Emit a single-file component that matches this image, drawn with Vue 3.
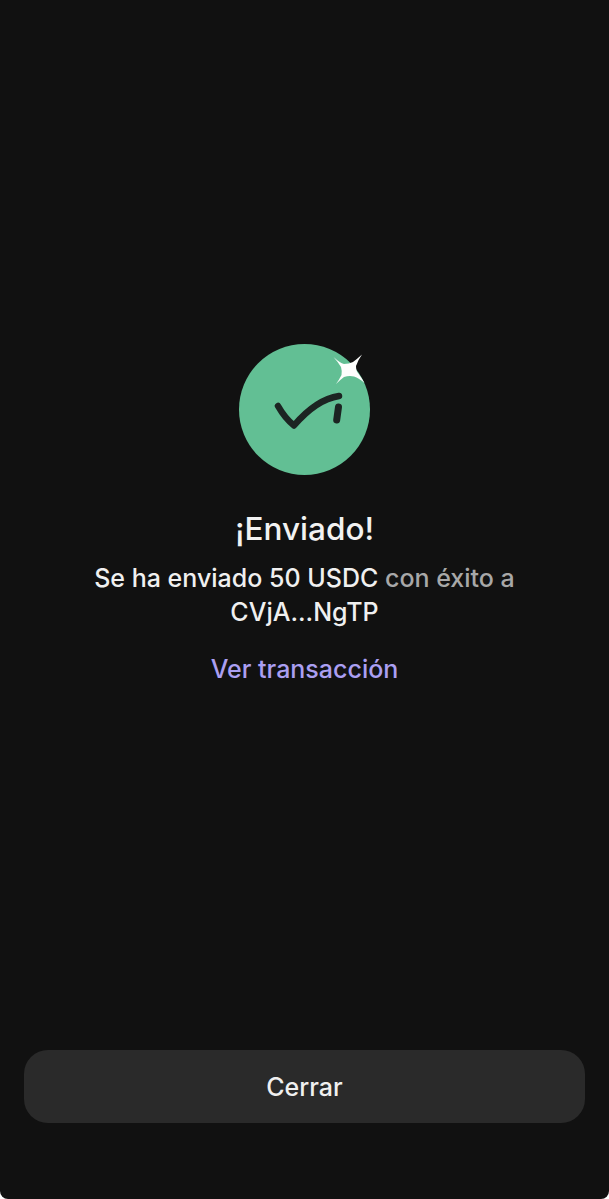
<script setup>
const amount = '50 USDC'
</script>

<template>
  <main class="screen">
    <section class="result">
      <svg class="badge" width="133" height="132" viewBox="0 0 133 132" aria-hidden="true">
        <circle cx="65.500" cy="65.500" r="65.500" fill="#62bf94" />
        <path d="M39 62 C43 69 48 76 55 81.500 C64 71 80 55 100 52" fill="none" stroke="#1c2422" stroke-width="6.500" stroke-linecap="round" stroke-linejoin="round" />
        <path d="M99.500 63 L97.700 76" fill="none" stroke="#1c2422" stroke-width="7" stroke-linecap="round" />
        <path d="M94.500 13 Q101 19 105 20 Q110 20 114 18 Q118 15 123 10.500 Q119 16 117 22 Q117 27 119 29 Q122 33 125.500 39 Q120 34 115 32.500 Q110 31.500 105 33 Q101 36 97 40 Q100 36 102.500 31 Q103 26 102 23 Q99 18 94.500 13 Z" fill="#fdfefd" />
      </svg>
      <h1 class="title">¡Enviado!</h1>
      <p class="message">
        <span class="strong">Se ha enviado {{ amount }}</span> <span class="muted">con éxito a</span><br />
        <span class="strong">CVjA...NgTP</span>
      </p>
      <a class="link">Ver transacción</a>
    </section>
    <footer class="actions">
      <button class="close" type="button">Cerrar</button>
    </footer>
  </main>
</template>

<style>
html, body { margin: 0; background: #fff; }
</style>

<style scoped>
.screen {
  box-sizing: border-box;
  width: 609px;
  height: 1199px;
  background: #111111;
  border-radius: 0 0 8px 8px;
  display: flex;
  flex-direction: column;
  font-family: Inter, "Liberation Sans", sans-serif;
  padding: 344px 24px 76px;
}
.result {
  flex: 1;
  display: flex;
  flex-direction: column;
  align-items: center;
}
.badge { display: block; margin-left: 1px; }
.title {
  margin: 28px 0 0;
  font-size: 31.500px;
  line-height: 50px;
  font-weight: 500;
  color: #f2f2f2;
}
.message {
  margin: 7px 0 0;
  font-size: 25px;
  line-height: 34px;
  text-align: center;
  font-weight: 500;
}
.strong { color: #f0f0f0; }
.muted { color: #a8a8a8; }
.link {
  margin-top: 23px;
  font-size: 25px;
  line-height: 34px;
  font-weight: 500;
  color: #ab9ff2;
}
.actions { display: flex; }
.close {
  width: 100%;
  height: 73px;
  border: 0;
  border-radius: 24px;
  background: #2a2a2a;
  color: #f0f0f0;
  font: 500 25px/34px Inter, "Liberation Sans", sans-serif;
}
</style>
